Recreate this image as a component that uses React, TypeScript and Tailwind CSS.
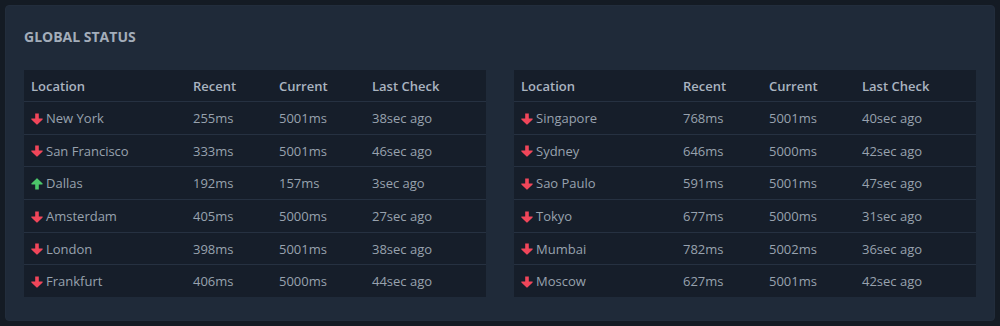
import React from 'react';

type Row = { location: string; up: boolean; recent: string; current: string; lastCheck: string };

const leftRows: Row[] = [
  { location: 'New York', up: false, recent: '255ms', current: '5001ms', lastCheck: '38sec ago' },
  { location: 'San Francisco', up: false, recent: '333ms', current: '5001ms', lastCheck: '46sec ago' },
  { location: 'Dallas', up: true, recent: '192ms', current: '157ms', lastCheck: '3sec ago' },
  { location: 'Amsterdam', up: false, recent: '405ms', current: '5000ms', lastCheck: '27sec ago' },
  { location: 'London', up: false, recent: '398ms', current: '5001ms', lastCheck: '38sec ago' },
  { location: 'Frankfurt', up: false, recent: '406ms', current: '5000ms', lastCheck: '44sec ago' },
];

const rightRows: Row[] = [
  { location: 'Singapore', up: false, recent: '768ms', current: '5001ms', lastCheck: '40sec ago' },
  { location: 'Sydney', up: false, recent: '646ms', current: '5000ms', lastCheck: '42sec ago' },
  { location: 'Sao Paulo', up: false, recent: '591ms', current: '5001ms', lastCheck: '47sec ago' },
  { location: 'Tokyo', up: false, recent: '677ms', current: '5000ms', lastCheck: '31sec ago' },
  { location: 'Mumbai', up: false, recent: '782ms', current: '5002ms', lastCheck: '36sec ago' },
  { location: 'Moscow', up: false, recent: '627ms', current: '5001ms', lastCheck: '42sec ago' },
];

// chunky arrow, drawn pointing down; rotated for "up"
const StatusArrow: React.FC<{ up: boolean }> = ({ up }) => (
  <svg
    viewBox="0 0 12 12"
    className={up ? 'w-[12px] h-[12px] rotate-180 text-[#4cc76a]' : 'w-[12px] h-[12px] text-[#f0465a]'}
    fill="currentColor"
  >
    <path d="M4.2 0.6h3.6v5h3.4c0.5 0 0.7 0.5 0.4 0.9l-5.2 5.1c-0.2 0.2-0.6 0.2-0.8 0L0.4 6.5c-0.3-0.4-0.1-0.9 0.4-0.9h3.4z" />
  </svg>
);

const StatusTable: React.FC<{ rows: Row[] }> = ({ rows }) => (
  <div className="bg-[#161e2a] text-[13px]">
    <div className="grid grid-cols-[162px_86px_93px_1fr] h-[31px] items-center px-[7px] pt-[2px] font-semibold text-[#aab4c0]">
      <span>Location</span>
      <span>Recent</span>
      <span>Current</span>
      <span>Last Check</span>
    </div>
    {rows.map((row) => (
      <div
        key={row.location}
        className="grid grid-cols-[162px_86px_93px_1fr] h-[32.67px] items-center px-[7px] pt-[2px] border-t border-[#263141] text-[#98a2ae]"
      >
        <span className="flex items-center gap-[3px]">
          <StatusArrow up={row.up} />
          {row.location}
        </span>
        <span>{row.recent}</span>
        <span>{row.current}</span>
        <span>{row.lastCheck}</span>
      </div>
    ))}
  </div>
);

const App: React.FC = () => {
  return (
    <div
      className="w-[1000px] h-[326px] bg-[#141b24] p-[5px]"
      style={{ fontFamily: '"Open Sans", "Liberation Sans", sans-serif' }}
    >
      <div className="h-[316px] rounded-[4px] border border-[#222d3c] bg-[#1f2a39] px-[18px] pt-[21px]">
        <h2 className="h-[20px] leading-[20px] text-[14px] font-bold uppercase text-[#a3adba] mb-[23px]">
          Global Status
        </h2>
        <div className="grid grid-cols-2 gap-[28px]">
          <StatusTable rows={leftRows} />
          <StatusTable rows={rightRows} />
        </div>
      </div>
    </div>
  );
};

export default App;
